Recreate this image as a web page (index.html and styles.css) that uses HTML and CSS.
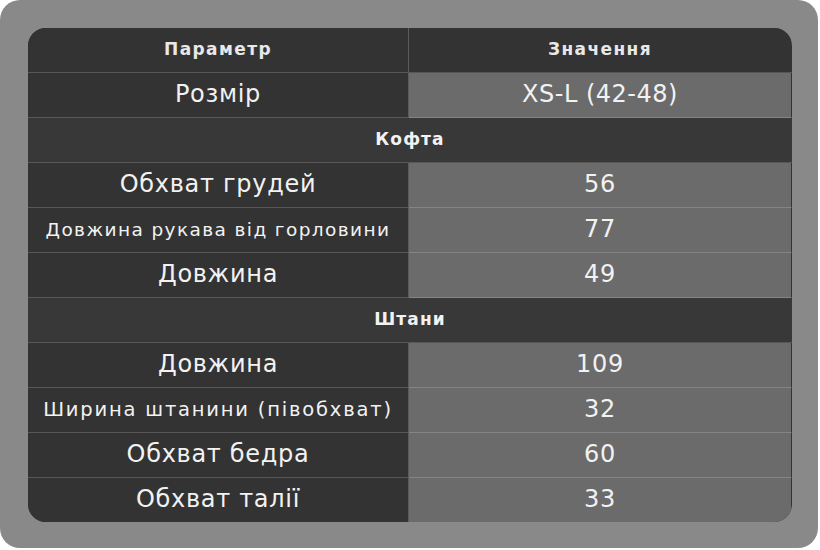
FILE: index.html
```html
<!DOCTYPE html>
<html lang="uk">
<head>
<meta charset="utf-8">
<link rel="stylesheet" href="styles.css">
</head>
<body>
<div class="frame">
  <div class="table">
    <div class="row head">
      <div class="cell left">Параметр</div>
      <div class="cell right">Значення</div>
    </div>
    <div class="row">
      <div class="cell left big">Розмір</div>
      <div class="cell right big size">XS-L (42-48)</div>
    </div>
    <div class="row section"><div class="cell">Кофта</div></div>
    <div class="row">
      <div class="cell left big">Обхват грудей</div>
      <div class="cell right big">56</div>
    </div>
    <div class="row">
      <div class="cell left small">Довжина рукава від горловини</div>
      <div class="cell right big">77</div>
    </div>
    <div class="row">
      <div class="cell left big">Довжина</div>
      <div class="cell right big">49</div>
    </div>
    <div class="row section"><div class="cell">Штани</div></div>
    <div class="row">
      <div class="cell left big">Довжина</div>
      <div class="cell right big">109</div>
    </div>
    <div class="row">
      <div class="cell left mid">Ширина штанини (півобхват)</div>
      <div class="cell right big">32</div>
    </div>
    <div class="row">
      <div class="cell left big">Обхват бедра</div>
      <div class="cell right big">60</div>
    </div>
    <div class="row last">
      <div class="cell left big">Обхват талії</div>
      <div class="cell right big">33</div>
    </div>
  </div>
</div>
</body>
</html>
```
FILE: styles.css
```css
html, body {
  margin: 0;
  padding: 0;
  background: #ffffff;
}
body {
  font-family: "DejaVu Sans", "Open Sans", sans-serif;
  color: #f2f2f2;
}
.frame {
  width: 818px;
  height: 548px;
  box-sizing: border-box;
  padding: 28px 26px 26px 28px;
  background: #898989;
  border-radius: 20px;
}
.table {
  width: 764px;
  height: 494px;
  border-radius: 18px;
  overflow: hidden;
  display: flex;
  flex-direction: column;
  background: #333333;
}
.row {
  display: flex;
  height: 44px;
  flex: none;
  border-bottom: 1px solid #575757;
}
.row.last {
  border-bottom: none;
}
.cell {
  display: flex;
  align-items: center;
  justify-content: center;
  white-space: nowrap;
  padding-bottom: 2px;
  box-sizing: border-box;
}
.left {
  width: 381px;
  background: #333333;
  border-right: 1px solid #5c5c5c;
}
.right {
  width: 382px;
  background: #6b6b6b;
}
.row:not(.head):not(.section):not(.last) .right {
  box-shadow: 0 1px 0 #848484;
}
.head .right {
  background: #333333;
}
.head .cell {
  font-size: 17px;
  font-weight: 600;
  letter-spacing: 1.4px;
  color: #e8e8e8;
}
.section .cell {
  width: 100%;
  font-size: 17px;
  font-weight: 600;
  letter-spacing: 1.1px;
  background: #383838;
}
.big {
  font-size: 24px;
  letter-spacing: 0.7px;
}
.size {
  letter-spacing: 0.5px;
}
.small {
  font-size: 18.5px;
  letter-spacing: 1.4px;
}
.mid {
  font-size: 19.5px;
  letter-spacing: 1.8px;
}
```
